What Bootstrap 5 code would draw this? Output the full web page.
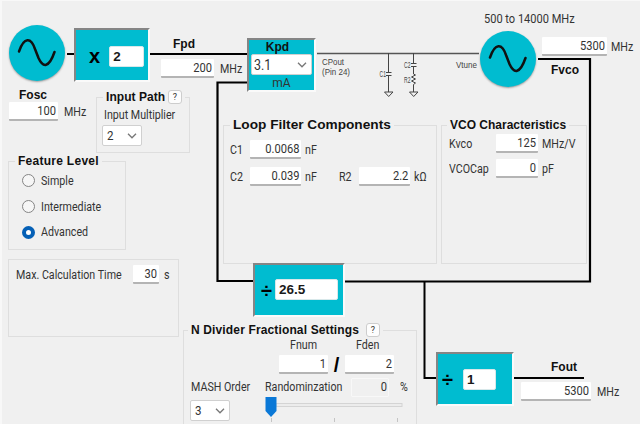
<!DOCTYPE html>
<html lang="en">
<head>
  <meta charset="UTF-8">
  <meta name="viewport" content="width=device-width, initial-scale=1.0">
  <title>PLL Block Diagram</title>
  <link href="https://cdn.jsdelivr.net/npm/bootstrap@5.3.0/dist/css/bootstrap.min.css" rel="stylesheet">
  <style>
    body {
      width: 640px;
      height: 424px;
      background: #f0f0f0;
      font-family: Roboto, "Liberation Sans", sans-serif;
      font-size: 12px;
      line-height: 14px;
      color: #333;
      overflow: hidden;
    }

    .sheet {
      width: 640px;
      height: 424px;
      border-top: 1px solid #f8f8f8;
      box-shadow: inset 2px 0 0 #f8f8f8;
    }

    /* condensed labels */
    .lbl {
      display: inline-block;
      white-space: nowrap;
      flex-shrink: 0;
      transform: scaleX(.89);
      transform-origin: 0 50%;
    }

    .ttl {
      display: inline-block;
      white-space: nowrap;
      font-family: "Liberation Sans", Arial, sans-serif;
      font-size: 12px;
      font-weight: 700;
      color: #111;
    }

    /* value boxes */
    .field {
      height: 19px;
      background: #fff;
      border-bottom: 2px solid #b4b4b4;
      border-radius: 1px;
      padding-right: 2px;
      display: flex;
      align-items: center;
      justify-content: flex-end;
      flex-shrink: 0;
    }

    .field .lbl {
      font-size: 12.5px;
      transform-origin: 100% 50%;
    }

    .field-off {
      width: 38px;
      padding-right: 1px;
      background: #f0f0f0;
      border: 1px solid #f8f8f8;
    }

    .pick {
      height: 21px;
      background: #fff;
      border: 1px solid #d0d0d0;
      border-radius: 2px;
      padding: 0 4px 0 4px;
      font-size: 13px;
      display: flex;
      align-items: center;
      justify-content: space-between;
    }

    .pick svg {
      width: 10px;
      height: 6px;
    }

    .help {
      width: 14px;
      height: 14px;
      background: #fdfdfd;
      border: 1px solid #cdcdcd;
      border-radius: 3px;
      font-size: 9px;
      line-height: 12px;
      text-align: center;
      flex-shrink: 0;
    }

    /* group boxes */
    .panel {
      border: 1px solid #dedede;
      flex-shrink: 0;
    }

    .panel-head {
      display: flex;
      align-items: center;
      width: max-content;
      height: 14px;
      margin: -8px 0 0 6px;
      padding: 0 3px;
      background: #f0f0f0;
    }

    .side { width: 183px; padding: 96px 0 0 8px; }
    .main-col { padding-top: 124px; }
    .p-path { width: 94px; height: 56px; margin-left: 88px; }
    .p-level { width: 118px; height: 89px; margin-top: 8px; }
    .p-time { width: 171px; height: 78px; margin-top: 9px; }
    .p-loop { width: 214px; height: 139px; margin-left: 40px; }
    .p-vco { width: 146px; height: 139px; margin-left: 4px; }
    .p-frac { width: 234px; height: 100px; margin-top: 66px; }

    .ttl-path { width: 62px; letter-spacing: .05px; }
    .ttl-level { letter-spacing: .27px; }
    .ttl-loop { width: 158px; transform: scaleX(1.138); transform-origin: 0 50%; }
    .ttl-frac { width: 175px; letter-spacing: .14px; }
    .p-frac .panel-head { margin-left: 4px; }
    .p-vco .panel-head { margin-left: 5px; }

    .opt { height: 25.700px; display: flex; align-items: center; padding-left: 13px; }

    .radio {
      width: 13px;
      height: 13px;
      border: 1px solid #858585;
      border-radius: 50%;
      background: #f6f6f6;
      margin-right: 6px;
    }

    .radio-on {
      border: 4px solid #0560b6;
      background: #fff;
    }

    .path-name { padding: 4px 0 0 7px; height: 18px; }
    .path-pick { width: 40px; margin: 3px 0 0 5px; }
    .time-row { padding: 5px 0 0 7px; }
    .t-name { width: 117px; }
    .t-unit { margin-left: 5px; }
    .loop-rows { padding-top: 4px; }
    .lrow { height: 27px; padding-left: 6px; }
    .c-name { width: 20px; }
    .c-unit { width: 34px; margin-left: 4px; }
    .vrow { height: 25px; padding-left: 7px; position: relative; top: -1px; }
    .v-name { width: 47px; }
    .v-unit { margin-left: 4px; }
    .frac-names { padding: 1px 0 0 106px; gap: 36px; }
    .frac-row { padding-left: 95px; margin-top: 3px; }
    .slash { width: 17px; text-align: center; }
    .mash-row { padding-left: 7px; margin-top: 2px; height: 20px; align-items: center; }
    .m-order { width: 74px; }
    .m-rand { width: 86px; }
    .m-pct { margin-left: 11px; }
    .slide-row { padding-left: 6px; }
    .slide-row .pick { width: 40px; margin-top: 3px; }
    .slider { margin-left: 35px; }

    /* diagram nodes */
    .wires { position: absolute; left: 0; top: 0; pointer-events: none; }
    .node { position: absolute; margin-top: -1px; }

    .block {
      background: #00bcd0;
      border: 2px solid;
      border-color: #858585 #fafafa #fafafa #858585;
      height: 54px;
      display: flex;
      align-items: center;
    }

    .block .value {
      height: 21px;
      background: #fff;
      border: 1px solid #d8e8ea;
      border-radius: 2px;
      padding: 0 3px;
      font-family: "Liberation Sans", Arial, sans-serif;
      font-weight: 700;
      font-size: 13.500px;
      line-height: 19px;
      color: #1a1a1a;
    }

    .op {
      font-family: "Liberation Sans", Arial, sans-serif;
      font-weight: 700;
      font-size: 20px;
      line-height: 20px;
      color: #000;
    }

    .osc {
      width: 56px;
      height: 56px;
      border-radius: 50%;
      background: #00bcd0;
      box-shadow: 0 1px 2px rgba(0, 0, 0, .35);
    }

    .n-fosc { left: 9px; top: 25px; }
    .n-vco { left: 480px; top: 31px; }
    .n-mult { left: 74px; top: 28px; width: 76px; }
    .n-kpd { left: 247px; top: 38px; width: 69px; }
    .n-ndiv { left: 253px; top: 263px; width: 92px; }
    .n-odiv { left: 436px; top: 352px; width: 78px; }
    .t-fosc { left: 9px; top: 88px; }
    .t-fpd { left: 161px; top: 37px; }
    .t-range { left: 484px; top: 12px; }
    .t-fvco { left: 542px; top: 37px; }
    .t-fout { left: 521px; top: 360px; }
    .t-range .lbl { transform: scaleX(.92); }

    .op-x { margin: 2px 0 0 13px; }
    .v-mult { margin: 2px 0 0 9px; width: 35px; }
    .op-n { width: 13px; margin: 2px 0 0 6px; }
    .v-n { width: 63px; margin: -2px 0 0 1px; }
    .op-o { width: 13px; margin: 1px 0 0 4px; }
    .v-o { width: 33px; margin: 1px 0 0 8px; }
    .kpd-name { height: 14px; margin-left: -8px; }
    .kpd-pick { width: 61px; padding-left: 2px; font-size: 14px; }
    .kpd-unit { margin-top: 1px; }
    .unit { margin-left: 6px; }
    .unit-near { margin-left: 4px; }
    .fosc-name { margin-left: 10px; }
    .fpd-name { margin-left: 12px; }
    .fpd-row, .fout-row { margin-top: 8px; }
    .fvco-name { margin: 7px 0 0 9px; }
    .fout-name { margin-left: 30px; }

    .w25 { width: 26px; }
    .w42 { width: 42px; }
    .w49 { width: 49px; }
    .w51 { width: 51px; }
    .w53 { width: 53px; }
    .w65 { width: 65px; }
    .w70 { width: 70px; }
  </style>
</head>
<body>

<div class="sheet d-flex position-relative">

  <!-- Connections and loop filter schematic -->
  <svg class="wires" width="640" height="424" viewBox="0 0 640 424" fill="none">
    <g stroke="#000" stroke-width="2">
      <path d="M67 53H75M150 53H248"/>
      <path d="M248 81.500H217.500V280H254" stroke-width="2.200"/>
      <path d="M538 58H590V280.500H345" stroke-width="2.200"/>
      <path d="M424.500 280V377H437M514 377H584"/>
    </g>
    <path d="M317 52.500H479" stroke="#555" stroke-width="1.700"/>
    <g stroke="#444" stroke-width="1">
      <path d="M388.500 52V71.500M386 71.500H391.500M386 74.500H391.500M388.500 75V91M384.500 91H393L388.700 95.500Z"/>
      <path d="M413.500 52V62.500M411 62.500H416.500M411 65.500H416.500M413.500 66V73L415.500 74L411.500 76L415.500 78L411.500 80L415.500 82L413.500 83.500V91M409.500 91H418L413.700 95.500Z"/>
    </g>
    <g fill="#444" font-family="Liberation Sans, sans-serif" font-size="8.500">
      <text x="322" y="64" textLength="22" lengthAdjust="spacingAndGlyphs">CPout</text>
      <text x="322" y="73.500" textLength="28" lengthAdjust="spacingAndGlyphs">(Pin 24)</text>
      <text x="456" y="67" textLength="21" lengthAdjust="spacingAndGlyphs">Vtune</text>
      <text x="379.500" y="76" textLength="6.500" lengthAdjust="spacingAndGlyphs">C1</text>
      <text x="404" y="67" textLength="6.500" lengthAdjust="spacingAndGlyphs">C2</text>
      <text x="404" y="81.500" textLength="6.500" lengthAdjust="spacingAndGlyphs">R2</text>
    </g>
  </svg>

  <!-- Left column -->
  <div class="side d-flex flex-column flex-shrink-0">
    <div class="panel p-path">
      <div class="panel-head"><span class="ttl ttl-path">Input Path</span><span class="help">?</span></div>
      <div class="path-name"><span class="lbl">Input Multiplier</span></div>
      <div class="pick path-pick"><span class="lbl">2</span>
        <svg viewBox="0 0 10 6" fill="none" stroke="#777" stroke-width="1.300"><path d="M1 .8L5 4.800L9 .8"/></svg>
      </div>
    </div>

    <div class="panel p-level">
      <div class="panel-head"><span class="ttl ttl-level">Feature Level</span></div>
      <div class="opt"><span class="radio"></span><span class="lbl">Simple</span></div>
      <div class="opt"><span class="radio"></span><span class="lbl">Intermediate</span></div>
      <div class="opt"><span class="radio radio-on"></span><span class="lbl">Advanced</span></div>
    </div>

    <div class="panel p-time">
      <div class="d-flex align-items-center time-row">
        <span class="lbl t-name">Max. Calculation Time</span>
        <div class="field w25"><span class="lbl">30</span></div>
        <span class="lbl t-unit">s</span>
      </div>
    </div>
  </div>

  <!-- Right column -->
  <div class="main-col flex-shrink-0">
    <div class="d-flex">
      <div class="panel p-loop">
        <div class="panel-head"><span class="ttl ttl-loop">Loop Filter Components</span></div>
        <div class="loop-rows">
          <div class="d-flex align-items-center lrow">
            <span class="lbl c-name">C1</span>
            <div class="field w51"><span class="lbl">0.0068</span></div>
            <span class="lbl c-unit">nF</span>
          </div>
          <div class="d-flex align-items-center lrow">
            <span class="lbl c-name">C2</span>
            <div class="field w51"><span class="lbl">0.039</span></div>
            <span class="lbl c-unit">nF</span>
            <span class="lbl c-name">R2</span>
            <div class="field w51"><span class="lbl">2.2</span></div>
            <span class="lbl ms-1">kΩ</span>
          </div>
        </div>
      </div>

      <div class="panel p-vco">
        <div class="panel-head"><span class="ttl">VCO Characteristics</span></div>
        <div class="d-flex align-items-center vrow">
          <span class="lbl v-name">Kvco</span>
          <div class="field w42"><span class="lbl">125</span></div>
          <span class="lbl v-unit">MHz/V</span>
        </div>
        <div class="d-flex align-items-center vrow">
          <span class="lbl v-name">VCOCap</span>
          <div class="field w42"><span class="lbl">0</span></div>
          <span class="lbl v-unit">pF</span>
        </div>
      </div>
    </div>

    <div class="panel p-frac">
      <div class="panel-head"><span class="ttl ttl-frac">N Divider Fractional Settings</span><span class="help">?</span></div>
      <div class="d-flex frac-names"><span class="lbl">Fnum</span><span class="lbl">Fden</span></div>
      <div class="d-flex frac-row">
        <div class="field w49"><span class="lbl">1</span></div>
        <span class="op slash">/</span>
        <div class="field w49"><span class="lbl">2</span></div>
      </div>
      <div class="d-flex mash-row">
        <span class="lbl m-order">MASH Order</span>
        <span class="lbl m-rand">Randominzation</span>
        <div class="field field-off"><span class="lbl">0</span></div>
        <span class="lbl m-pct">%</span>
      </div>
      <div class="d-flex slide-row">
        <div class="pick"><span class="lbl">3</span>
          <svg viewBox="0 0 10 6" fill="none" stroke="#777" stroke-width="1.300"><path d="M1 .8L5 4.800L9 .8"/></svg>
        </div>
        <svg class="slider" width="140" height="26" viewBox="0 0 140 26">
          <rect x="11" y="6.500" width="126" height="3" fill="#ececec" stroke="#d4d4d4"/>
          <path d="M.5 0H11.500V14L6 20L.5 14Z" fill="#0a78d7"/>
          <path d="M6.500 21V25M69.500 21V25M132.500 21V25" stroke="#c4c4c4"/>
        </svg>
      </div>
    </div>
  </div>

  <!-- Diagram nodes -->
  <div class="node osc n-fosc">
    <svg class="d-block" width="56" height="56" fill="none" stroke="#111" stroke-width="2.500" stroke-linecap="round"><path d="M10 26.500C15 12 22 12 26 24L29.500 33C34 43 40 43 45.500 27"/></svg>
  </div>
  <div class="node block n-mult"><span class="op op-x">x</span><span class="value v-mult">2</span></div>
  <div class="node block n-kpd flex-column">
    <span class="ttl kpd-name">Kpd</span>
    <div class="pick kpd-pick"><span class="lbl">3.1</span>
      <svg viewBox="0 0 10 6" fill="none" stroke="#777" stroke-width="1.300"><path d="M1 .8L5 4.800L9 .8"/></svg>
    </div>
    <span class="kpd-unit">mA</span>
  </div>
  <div class="node osc n-vco">
    <svg class="d-block" width="56" height="56" fill="none" stroke="#111" stroke-width="2.500" stroke-linecap="round"><path d="M10 26.500C15 12 22 12 26 24L29.500 33C34 43 40 43 45.500 27"/></svg>
  </div>
  <div class="node block n-ndiv"><span class="op op-n">÷</span><span class="value v-n">26.5</span></div>
  <div class="node block n-odiv"><span class="op op-o">÷</span><span class="value v-o">1</span></div>

  <!-- Frequencies at each node -->
  <div class="node t-fosc">
    <span class="ttl fosc-name">Fosc</span>
    <div class="d-flex align-items-center"><div class="field w49"><span class="lbl">100</span></div><span class="lbl unit">MHz</span></div>
  </div>
  <div class="node t-fpd">
    <span class="ttl fpd-name">Fpd</span>
    <div class="d-flex align-items-center fpd-row"><div class="field w53"><span class="lbl">200</span></div><span class="lbl unit">MHz</span></div>
  </div>
  <div class="node t-range"><span class="lbl">500 to 14000 MHz</span></div>
  <div class="node t-fvco">
    <div class="d-flex align-items-center"><div class="field w65"><span class="lbl">5300</span></div><span class="lbl unit-near">MHz</span></div>
    <span class="ttl fvco-name">Fvco</span>
  </div>
  <div class="node t-fout">
    <span class="ttl fout-name">Fout</span>
    <div class="d-flex align-items-center fout-row"><div class="field w70"><span class="lbl">5300</span></div><span class="lbl unit">MHz</span></div>
  </div>
</div>

<script src="https://cdn.jsdelivr.net/npm/bootstrap@5.3.0/dist/js/bootstrap.bundle.min.js"></script>
</body>
</html>
